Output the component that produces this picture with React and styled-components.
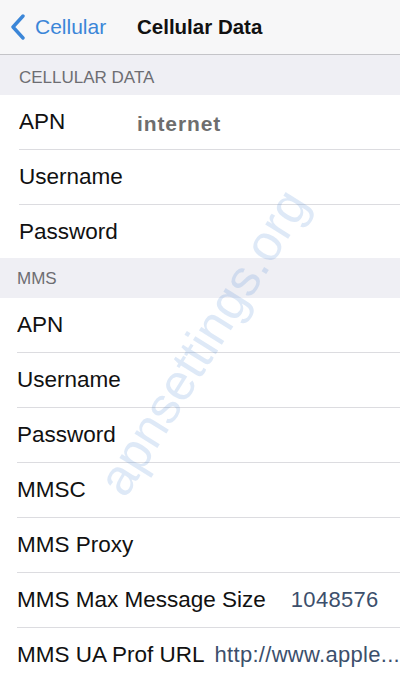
import React from "react";
import styled, { createGlobalStyle } from "styled-components";

const GlobalStyle = createGlobalStyle`
  html, body {
    margin: 0;
    padding: 0;
    background: #ffffff;
    font-family: "Liberation Sans", Arial, sans-serif;
  }
`;

const Screen = styled.div`
  position: relative;
  width: 400px;
  height: 680px;
  overflow: hidden;
  background: #ffffff;
`;

const NavBar = styled.div`
  height: 54px;
  display: flex;
  align-items: center;
  background: #f7f7f8;
  border-bottom: 1px solid #c4c4c8;
`;

const BackButton = styled.div`
  display: flex;
  align-items: center;
  gap: 9px;
  padding-left: 10px;
  width: 127px;
  color: #3b86d8;
  font-size: 21px;
`;

const Title = styled.div`
  font-size: 20.5px;
  font-weight: bold;
  color: #111111;
`;

const SectionHeader = styled.div`
  height: 40px;
  box-sizing: border-box;
  padding-top: ${(p) => p.drop || 0}px;
  display: flex;
  align-items: center;
  padding-left: ${(p) => p.inset}px;
  background: #efeff4;
  color: #6d6d72;
  font-size: 17px;
`;

const Section = styled.div`
  padding-left: ${(p) => p.inset}px;
  background: #ffffff;
`;

const Row = styled.div`
  height: ${(p) => p.h || 54}px;
  display: flex;
  align-items: center;
  gap: ${(p) => p.gap || 0}px;
  border-bottom: ${(p) => (p.last ? "none" : "1px solid #dcdce0")};
  white-space: nowrap;
  overflow: hidden;
`;

const Label = styled.div`
  flex: none;
  width: ${(p) => (p.w ? p.w + "px" : "auto")};
  font-size: 22.5px;
  color: #111111;
`;

const Value = styled.div`
  font-size: ${(p) => (p.bold ? 21 : 22)}px;
  font-weight: ${(p) => (p.bold ? "bold" : "normal")};
  letter-spacing: ${(p) => (p.bold ? "0.9px" : "0.3px")};
  color: ${(p) => (p.bold ? "#6e6e6e" : "#3c4f6c")};
  margin-top: ${(p) => (p.bold ? 3 : 0)}px;
`;

const Watermark = styled.div`
  position: absolute;
  left: 203px;
  top: 342px;
  transform: translate(-50%, -50%) rotate(-58deg);
  font-size: 51px;
  color: rgba(60, 125, 210, 0.17);
  white-space: nowrap;
  pointer-events: none;
`;

const cellularRows = [
  { label: "APN", value: "internet" },
  { label: "Username" },
  { label: "Password" },
];

const mmsRows = [
  { label: "APN" },
  { label: "Username" },
  { label: "Password" },
  { label: "MMSC" },
  { label: "MMS Proxy" },
  { label: "MMS Max Message Size", value: "1048576", gap: 25 },
  { label: "MMS UA Prof URL", value: "http://www.apple...", gap: 10 },
];

export default function App() {
  return (
    <Screen>
      <GlobalStyle />
      <NavBar>
        <BackButton>
          <svg width="16" height="26" viewBox="0 0 16 26">
            <polyline
              points="13,2 3,13 13,24"
              fill="none"
              stroke="#3b86d8"
              strokeWidth="3.4"
              strokeLinecap="round"
              strokeLinejoin="round"
            />
          </svg>
          <span>Cellular</span>
        </BackButton>
        <Title>Cellular Data</Title>
      </NavBar>

      <SectionHeader inset={19} drop={5}>CELLULAR DATA</SectionHeader>
      <Section inset={19}>
        {cellularRows.map((r, i) => (
          <Row key={r.label} last={i === cellularRows.length - 1} h={i === 2 ? 53 : 54}>
            <Label w={118}>{r.label}</Label>
            {r.value && <Value bold>{r.value}</Value>}
          </Row>
        ))}
      </Section>

      <SectionHeader inset={17} drop={2}>MMS</SectionHeader>
      <Section inset={17}>
        {mmsRows.map((r, i) => (
          <Row key={r.label + i} gap={r.gap} last={i === mmsRows.length - 1}>
            <Label>{r.label}</Label>
            {r.value && <Value>{r.value}</Value>}
          </Row>
        ))}
      </Section>

      <Watermark>apnsettings.org</Watermark>
    </Screen>
  );
}
